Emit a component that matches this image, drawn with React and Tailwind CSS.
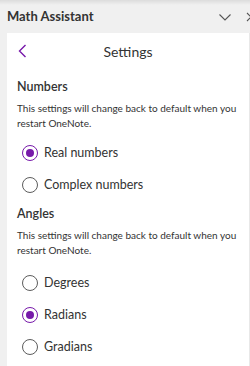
import React, { useState } from 'react'

const Radio = ({ checked, label, onClick }) => (
  <button onClick={onClick} className="flex items-center gap-[6px] h-[32px] text-left">
    <span
      className={`w-[16px] h-[16px] rounded-full border flex items-center justify-center ${
        checked ? 'border-[#7719aa]' : 'border-[#5c5c5c]'
      }`}
    >
      {checked && <span className="w-[8px] h-[8px] rounded-full bg-[#7719aa]" />}
    </span>
    <span className="text-[12.5px] text-[#333]">{label}</span>
  </button>
)

const Section = ({ title, options, value, setValue, listClass }) => (
  <div className="px-[10px]">
    <h3 className="text-[12.5px] font-semibold text-[#333] leading-[18px]">{title}</h3>
    <p className="text-[10px] leading-[15px] text-[#333] mt-[5px]">
      This settings will change back to default when you restart OneNote.
    </p>
    <div className={`pl-[5px] flex flex-col ${listClass}`}>
      {options.map(o => (
        <Radio key={o} label={o} checked={value === o} onClick={() => setValue(o)} />
      ))}
    </div>
  </div>
)

const App = () => {
  const [numbers, setNumbers] = useState('Real numbers')
  const [angles, setAngles] = useState('Radians')

  return (
    <div className="w-[250px] h-[366px] overflow-hidden bg-[#f0f0f0] flex flex-col font-['Lato','Open_Sans',sans-serif]">
      <div className="h-[33px] shrink-0 flex items-center pl-[7px] bg-gradient-to-b from-[#dcdcdc] via-[#f0f0f0] via-[15%] to-[#f0f0f0]">
        <span className="text-[13px] font-bold text-[#333] mt-[1px]">Math Assistant</span>
        <svg className="ml-auto mr-[15px] mt-[1px]" width="12" height="7" viewBox="0 0 12 7">
          <path d="M0.5 0.5 L6 6 L11.5 0.5" fill="none" stroke="#555" strokeWidth="1.1" />
        </svg>
        <svg className="mr-[-6px] mt-[1px]" width="10" height="10" viewBox="0 0 10 10">
          <path d="M1 1 L9 9 M9 1 L1 9" fill="none" stroke="#555" strokeWidth="1.1" />
        </svg>
      </div>
      <div className="flex-1 ml-[7px] bg-white border-r border-[#e8e8e8]">
        <div className="h-[36px] flex items-center relative">
          <svg className="ml-[11px]" width="9" height="14" viewBox="0 0 9 14">
            <path d="M7.5 1 L1.5 7 L7.5 13" fill="none" stroke="#7719aa" strokeWidth="1.4" />
          </svg>
          <span className="absolute left-0 right-0 text-center text-[14px] text-[#333] pointer-events-none">Settings</span>
        </div>
        <div className="mt-[9px]">
          <Section
            title="Numbers"
            options={['Real numbers', 'Complex numbers']}
            value={numbers}
            setValue={setNumbers}
            listClass="mt-[6px]"
          />
        </div>
        <div className="mt-[4px]">
          <Section
            title="Angles"
            options={['Degrees', 'Radians', 'Gradians']}
            value={angles}
            setValue={setAngles}
            listClass="mt-[9px]"
          />
        </div>
      </div>
    </div>
  )
}

export default App
